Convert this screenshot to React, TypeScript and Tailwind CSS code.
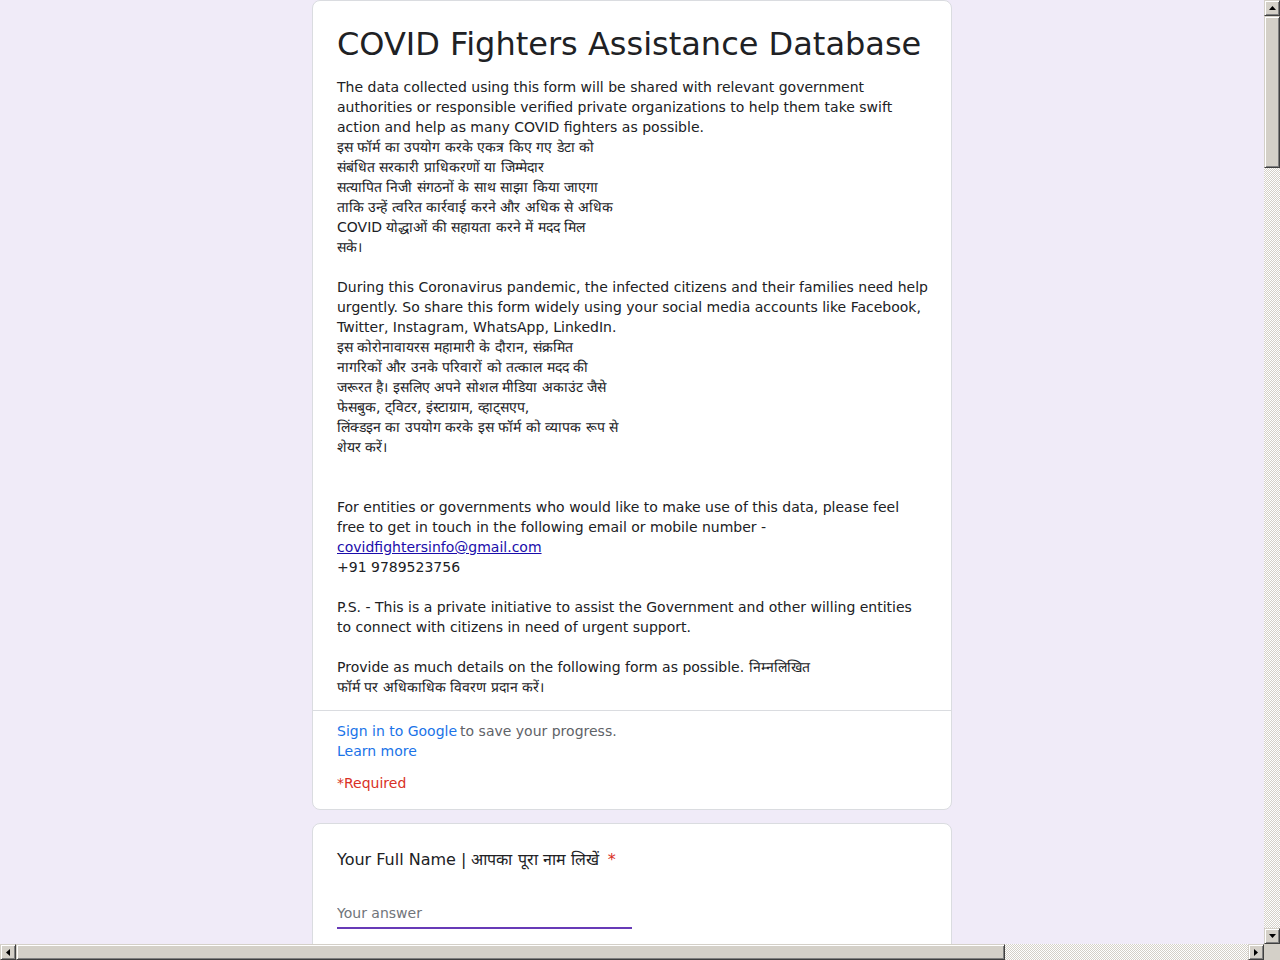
const hindiIntro = [
  "इस फॉर्म का उपयोग करके एकत्र किए गए डेटा को",
  "संबंधित सरकारी प्राधिकरणों या जिम्मेदार",
  "सत्यापित निजी संगठनों के साथ साझा किया जाएगा",
  "ताकि उन्हें त्वरित कार्रवाई करने और अधिक से अधिक",
  "COVID योद्धाओं की सहायता करने में मदद मिल",
  "सके।",
].join("\n");

const hindiShare = [
  "इस कोरोनावायरस महामारी के दौरान, संक्रमित",
  "नागरिकों और उनके परिवारों को तत्काल मदद की",
  "जरूरत है। इसलिए अपने सोशल मीडिया अकाउंट जैसे",
  "फेसबुक, ट्विटर, इंस्टाग्राम, व्हाट्सएप,",
  "लिंक्डइन का उपयोग करके इस फॉर्म को व्यापक रूप से",
  "शेयर करें।",
].join("\n");

const introText = `The data collected using this form will be shared with relevant government authorities or responsible verified private organizations to help them take swift action and help as many COVID fighters as possible.
${hindiIntro}

During this Coronavirus pandemic, the infected citizens and their families need help urgently. So share this form widely using your social media accounts like Facebook, Twitter, Instagram, WhatsApp, LinkedIn.
${hindiShare}


For entities or governments who would like to make use of this data, please feel free to get in touch in the following email or mobile number - `;

const outroText = `
+91 9789523756

P.S. - This is a private initiative to assist the Government and other willing entities to connect with citizens in need of urgent support.

Provide as much details on the following form as possible. निम्नलिखित
फॉर्म पर अधिकाधिक विवरण प्रदान करें।`;

const questions = [
  "Your Full Name | आपका पूरा नाम लिखें",
  "Your Mobile Number | आपका मोबाइल नंबर",
  "Your Age | आपकी उम्र",
  "Your City / District | आपका शहर / जिला",
  "Your State | आपका राज्य",
  "Your Full Address | आपका पूरा पता",
  "Type of help needed | किस प्रकार की मदद चाहिए",
  "Number of family members | परिवार के सदस्यों की संख्या",
];

// classic 3d bevel used by the scrollbar pieces
const bevel =
  "bg-[#d4d0c8] border border-t-[#d4d0c8] border-l-[#d4d0c8] border-r-[#404040] border-b-[#404040] shadow-[inset_1px_1px_#ffffff,inset_-1px_-1px_#808080]";
const dither =
  "bg-[image:repeating-conic-gradient(#d4d0c8_0_25%,#ffffff_0_50%)] bg-[length:2px_2px]";

function Arrow({ dir }: { dir: "up" | "down" | "left" | "right" }) {
  const paths = {
    up: "M3.5 0L7 4H0z",
    down: "M0 0h7L3.5 4z",
    left: "M0 3.5L4 0v7z",
    right: "M0 0l4 3.5L0 7z",
  };
  const vertical = dir === "up" || dir === "down";
  return (
    <div className={`${bevel} flex h-4 w-4 shrink-0 items-center justify-center`}>
      <svg
        width={vertical ? 7 : 4}
        height={vertical ? 4 : 7}
        viewBox={vertical ? "0 0 7 4" : "0 0 4 7"}
      >
        <path d={paths[dir]} fill="#000" />
      </svg>
    </div>
  );
}

function QuestionCard({ title }: { title: string }) {
  return (
    <div className="mt-[13px] rounded-lg border border-[#dadce0] bg-white px-6 pt-6 pb-6">
      <div className="text-[16px] leading-6 text-[#202124]">
        {title}
        <span className="ml-[9px] text-[#d93025]">*</span>
      </div>
      <input
        className="mt-[26px] block h-[31px] w-1/2 border-b-2 border-[#673ab7] bg-transparent text-[14px] text-[#202124] outline-none placeholder:text-[#70757a]"
        placeholder="Your answer"
      />
    </div>
  );
}

function FormPage() {
  return (
    <div className="min-h-full bg-[#f0ebf8] font-['DejaVu_Sans',sans-serif]">
      <div className="mx-auto w-[640px] pb-16">
        {/* Header card */}
        <div className="rounded-lg border border-[#dadce0] bg-white">
          <div className="pt-[23px] pr-[22px] pb-[13px] pl-6">
            <h1 className="text-[32px] leading-10 text-[#202124]">
              COVID Fighters Assistance Database
            </h1>
            <div className="mt-[13px] whitespace-pre-wrap text-[14px] leading-5 text-[#202124]">
              {introText}
              <a
                className="text-[#1a0dab] underline"
                href="mailto:covidfightersinfo@gmail.com"
              >
                covidfightersinfo@gmail.com
              </a>
              {outroText}
            </div>
          </div>
          <div className="border-t border-[#dadce0] px-6 pt-[10px] pb-4 text-[14px] leading-5">
            <div>
              <a className="text-[#1a73e8]" href="#">
                Sign in to Google
              </a>
              <span className="ml-[3px] text-[#5f6368]">to save your progress.</span>
            </div>
            <a className="block w-fit text-[#1a73e8]" href="#">
              Learn more
            </a>
            <div className="mt-3 text-[#d93025]">*Required</div>
          </div>
        </div>

        {questions.map((q) => (
          <QuestionCard key={q} title={q} />
        ))}

        <div className="mt-6 flex items-center justify-between">
          <button className="rounded bg-[#673ab7] px-6 py-2 text-[14px] text-white">
            Submit
          </button>
          <span className="text-[14px] text-[#673ab7]">Clear form</span>
        </div>
      </div>
    </div>
  );
}

export default function App() {
  return (
    <div className="flex h-screen flex-col overflow-hidden">
      <div className="flex min-h-0 flex-1">
        <div className="min-w-0 flex-1 overflow-auto [scrollbar-width:none]">
          <FormPage />
        </div>
        {/* vertical scrollbar */}
        <div className="flex w-4 flex-col">
          <Arrow dir="up" />
          <div className={`${bevel} h-[152px]`} />
          <div className={`${dither} flex-1`} />
          <Arrow dir="down" />
        </div>
      </div>
      {/* horizontal scrollbar */}
      <div className="flex h-4">
        <Arrow dir="left" />
        <div className={`${bevel} w-[989px]`} />
        <div className={`${dither} flex-1`} />
        <Arrow dir="right" />
        <div className="w-4 bg-[#d4d0c8]" />
      </div>
    </div>
  );
}
